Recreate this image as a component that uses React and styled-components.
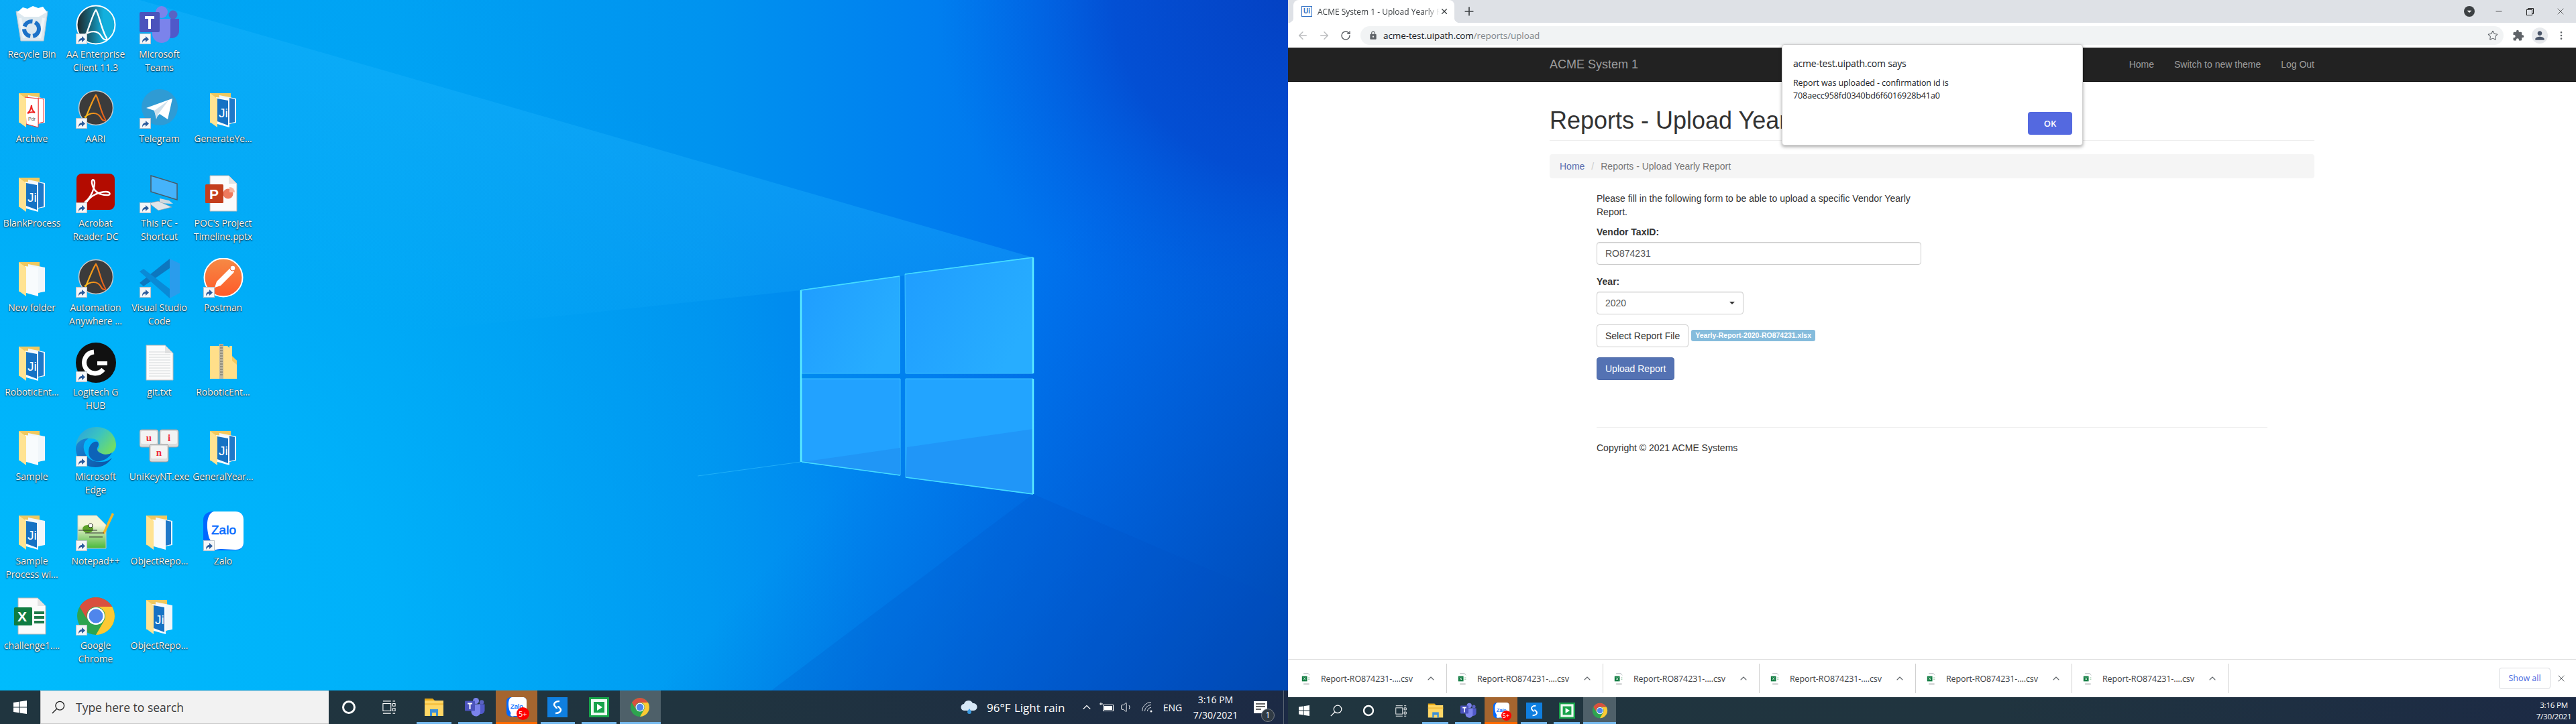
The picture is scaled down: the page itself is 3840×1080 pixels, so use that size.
import React from 'react';
import styled, { createGlobalStyle } from 'styled-components';
import { ArrowLeft, ArrowRight, RotateCw, Star, MoreVertical, ChevronUp, Minus, X, Plus, Volume1 } from 'lucide-react';
import { MdLock, MdExtension, MdPerson, MdArrowDropDown } from 'react-icons/md';

const GlobalStyle = createGlobalStyle`
  html, body { margin: 0; padding: 0; background: #000; }
  * { box-sizing: border-box; }
`;

const sysFont = `"Open Sans", "Noto Sans", sans-serif`;
const siteFont = `"Liberation Sans", Arial, sans-serif`;

const Screen = styled.div`
  display: flex;
  width: 3840px;
  height: 1080px;
  overflow: hidden;
`;

const Monitor = styled.div`
  position: relative;
  display: flex;
  flex-direction: column;
  width: 1920px;
  height: 1080px;
  background: #fff;
`;

/* ---------- wallpaper + desktop ---------- */

const Desktop = styled.div`
  position: relative;
  flex: 1;
  overflow: hidden;
`;

const WallpaperArt = styled.svg`
  position: absolute;
  inset: 0;
  width: 100%;
  height: 100%;
`;

const IconGrid = styled.div`
  position: relative;
  display: grid;
  grid-template-columns: repeat(4, 95px);
  grid-auto-rows: 126px;
`;

const DeskItem = styled.div`
  display: flex;
  flex-direction: column;
  align-items: center;
  padding-top: 7px;
`;

const DeskIconBox = styled.div`
  position: relative;
  width: 60px;
  height: 60px;
  svg { display: block; }
`;

const DeskLabel = styled.div`
  margin-top: 4px;
  width: 95px;
  text-align: center;
  white-space: pre-line;
  font: 400 14px/20px ${sysFont};
  letter-spacing: -0.1px;
  color: #fff;
  text-shadow: 0 1px 2px rgba(0, 0, 0, 0.85), 0 0 1px rgba(0, 0, 0, 0.7);
`;

const ShortcutBadge = styled.span`
  position: absolute;
  left: 0;
  bottom: 1px;
  width: 17px;
  height: 16px;
  background: #f4f6f8;
  border: 1px solid #b9c2c9;
  display: flex;
  align-items: center;
  justify-content: center;
`;

const Svg = ({ size = 60, children, box = '0 0 60 60' }) => (
  <svg width={size} height={size} viewBox={box}>{children}</svg>
);

const FolderIcon = ({ kind }) => {
  const front = kind === 'ui' || kind === 'uiFront';
  const stripe = kind === 'ui' || kind === 'uiBack';
  return (
    <Svg>
      <polygon points="10,6 41,6 41,52 10,50" fill="#efc85f" />
      <polygon points="24,9 49,14 49,50 38,52 24,50" fill="#f1f6fa" />
      {stripe && <polygon points="39,13 47,15 47,49 39,51" fill="#1f78c8" />}
      {kind === 'pdf' && <polygon points="39,13 47,15 47,49 39,51" fill="#fff" stroke="#e33" strokeWidth="1" />}
      <polygon points="19,12 39,14 39,57 21,52" fill={kind === 'pdf' ? '#fff' : '#f8fbfd'} stroke={kind === 'pdf' ? '#e33' : 'none'} />
      {front && <polygon points="21,14 37,17 37,54 21,48" fill="#1672c4" />}
      {front && <text x="23" y="42" fontFamily="Liberation Sans" fontSize="19" fill="#fff">Ji</text>}
      {kind === 'pdf' && <path d="M29 24c-1 6-3 10-6 12 4-2 8-2 11-1-3-2-5-6-5-11z" fill="none" stroke="#e22" strokeWidth="2" />}
      {kind === 'pdf' && <text x="24" y="47" fontFamily="Liberation Sans" fontSize="7" fill="#555">Pdr</text>}
      <polygon points="10,6 21,14 21,57 10,49" fill="#ffe392" />
    </Svg>
  );
};

const ZipFolder = () => (
  <Svg>
    <path d="M10 5h26l3 3v-3h4v16l7 6v27H10z" fill="#ffdf8a" />
    <path d="M43 5v22l7 6v-6l-7-7z" fill="#f3c95f" />
    <rect x="24" y="2" width="6" height="52" fill="#bdb7a2" />
    <path d="M25 4h4M25 8h4M25 12h4M25 16h4M25 20h4M25 24h4M25 28h4M25 32h4M25 36h4M25 40h4M25 44h4M25 48h4" stroke="#6d6a5c" strokeWidth="1.2" />
  </Svg>
);

const RecycleIcon = () => (
  <Svg>
    <polygon points="6,10 53,10 47,54 13,54" fill="#dce8ef" stroke="#b8c7d0" />
    <path d="M8 11l8-7 7 2 8-4 8 3 7-2 6 8-12 7H18z" fill="#fff" />
    <path d="M12 20l6 30M47 20l-6 30" stroke="#f7fbfd" strokeWidth="4" opacity="0.7" />
    <circle cx="29" cy="36" r="11" fill="none" stroke="#1c72c8" strokeWidth="6" strokeDasharray="15 4" />
  </Svg>
);

const AaIcon = () => (
  <Svg>
    <defs>
      <linearGradient id="aaG" x1="0" x2="1">
        <stop offset="0" stopColor="#1d2528" />
        <stop offset="0.4" stopColor="#186f87" />
        <stop offset="0.7" stopColor="#12b0de" />
      </linearGradient>
    </defs>
    <circle cx="30" cy="30" r="28.5" fill="url(#aaG)" stroke="#fff" strokeWidth="2" />
    <path d="M15 46C21 30 26 12 30 8c4 4 8 28 15 40 4 6-3 6-7-1-5-9-16-9-27-1" fill="none" stroke="#fff" strokeWidth="2.4" />
  </Svg>
);

const AariIcon = () => (
  <Svg>
    <defs>
      <linearGradient id="arG" x1="0" x2="1">
        <stop offset="0" stopColor="#ffc21a" />
        <stop offset="1" stopColor="#e2581c" />
      </linearGradient>
    </defs>
    <circle cx="30" cy="28" r="25.5" fill="#3b3b3b" stroke="#c9c9c9" strokeWidth="1.5" />
    <path d="M14 44C20 30 26 14 30 9c4 5 7 24 13 34 4 6-3 5-6-1-5-8-15-8-24 0" fill="none" stroke="url(#arG)" strokeWidth="2.2" />
  </Svg>
);

const TeamsIcon = ({ size = 60 }) => (
  <Svg size={size}>
    <circle cx="33" cy="11" r="9" fill="#7b83eb" />
    <circle cx="50" cy="15" r="6.5" fill="#5a62c3" />
    <path d="M42 21h17v18c0 7-6 11-11 11-3 0-5-1-6-2z" fill="#5059c9" />
    <path d="M19 21h27v24c0 7-6 12-13 12s-14-6-14-13z" fill="#7b83eb" />
    <rect x="0" y="11" width="30" height="30" rx="2" fill="#4b53bc" />
    <path d="M8 17h14v4h-5v15h-4V21H8z" fill="#fff" />
  </Svg>
);

const TelegramIcon = () => (
  <Svg>
    <circle cx="30" cy="27" r="27" fill="#2f9bd4" />
    <path d="M10 28l39-14-7 31-12-8-5 5-3-10z" fill="#fff" />
    <path d="M22 32l21-15-15 20-3 8z" fill="#cfe0ec" />
  </Svg>
);

const AcrobatIcon = () => (
  <Svg>
    <rect x="1" y="0" width="57" height="54" rx="8" fill="#b30b00" />
    <path d="M14 42c6-4 13-15 14-28 0-7-5-6-4 0 2 12 9 18 23 18 6 0 4-5-2-5-9 0-22 5-28 14-2 3-4 2-3 1z" fill="none" stroke="#fff" strokeWidth="2.4" />
  </Svg>
);

const ThisPcIcon = () => (
  <Svg>
    <polygon points="17,3 56,15 56,39 17,27" fill="#45b3fb" stroke="#4a5a66" strokeWidth="1.5" />
    <polygon points="30,37 44,40 50,45 30,44" fill="#cfd8de" />
    <polygon points="14,44 28,41 48,50 28,55" fill="#dfe6ea" stroke="#8b98a0" strokeWidth="0.7" />
  </Svg>
);

const PageShape = ({ x1 = 10, x2 = 50, top = 3, bottom = 56 }) => (
  <>
    <path d={`M${x1} ${top}h${x2 - x1 - 12}l12 12v${bottom - top - 12}H${x1}z`} fill="#fbfbfb" stroke="#b7b7b7" />
    <path d={`M${x2 - 12} ${top}v12h12z`} fill="#e3e3e3" />
  </>
);

const PptIcon = () => (
  <Svg>
    <PageShape />
    <circle cx="37" cy="30" r="7.5" fill="#ee7a5d" />
    <path d="M39 20a8 8 0 0 1 8 8h-8z" fill="#f7b5a0" />
    <rect x="3" y="16" width="27" height="28" rx="1.5" fill="#c43e1c" />
    <text x="9" y="38" fontFamily="Liberation Sans" fontWeight="700" fontSize="21" fill="#fff">P</text>
  </Svg>
);

const ExcelIcon = () => (
  <Svg>
    <PageShape x1={9} x2={50} top={3} bottom={57} />
    <path d="M33 23h15v4H33zM33 30h15v4H33zM33 37h15v4H33z" fill="#1f7a4a" />
    <rect x="3" y="17" width="27" height="27" rx="1.5" fill="#107c41" />
    <text x="8" y="38" fontFamily="Liberation Sans" fontWeight="700" fontSize="21" fill="#fff">X</text>
  </Svg>
);

const VsCodeIcon = () => (
  <Svg>
    <path d="M45 1l15 7v44l-15 8z" fill="#2a9cec" />
    <path d="M45 1L0 37l6 5L45 15z" fill="#0d77bf" />
    <path d="M0 20l6-4 39 30v14z" fill="#0a8ad6" />
  </Svg>
);

const PostmanIcon = () => (
  <Svg>
    <defs>
      <linearGradient id="pmG" x1="0" y1="0" x2="0" y2="1">
        <stop offset="0" stopColor="#f58a45" />
        <stop offset="1" stopColor="#ff5a2a" />
      </linearGradient>
    </defs>
    <circle cx="30" cy="29" r="28.5" fill="url(#pmG)" stroke="#fff" strokeWidth="2" />
    <path d="M17 44l3-9 19-19c4-3 9 2 6 6L26 41z" fill="#fff" />
    <circle cx="44" cy="15" r="4" fill="#fff" stroke="#f26b3a" />
  </Svg>
);

const LogiIcon = () => (
  <Svg>
    <circle cx="30" cy="30" r="30" fill="#111" />
    <path d="M27 14a16 16 0 1 0 14 26" fill="none" stroke="#fff" strokeWidth="7" />
    <path d="M32 28h15v6H32z" fill="#fff" />
  </Svg>
);

const TextFileIcon = () => (
  <Svg>
    <PageShape x1={10} x2={50} top={4} bottom={56} />
    {[14, 18, 22, 26, 30, 34, 38, 42, 46, 50].map(y => (
      <path key={y} d={`M14 ${y}h32`} stroke="#d5d8da" strokeWidth="1" />
    ))}
  </Svg>
);

const EdgeIcon = () => (
  <Svg>
    <defs>
      <linearGradient id="edA" x1="0" y1="0" x2="1" y2="0.6">
        <stop offset="0" stopColor="#2a9fe0" />
        <stop offset="0.55" stopColor="#3bc4c0" />
        <stop offset="1" stopColor="#6fdc68" />
      </linearGradient>
      <linearGradient id="edB" x1="0" y1="0" x2="1" y2="1">
        <stop offset="0" stopColor="#1a88d8" />
        <stop offset="1" stopColor="#0c4fa0" />
      </linearGradient>
    </defs>
    <path d="M0 32C0 13 13 0 31 0c16 0 29 11 29 27 0 9-7 14-16 14-7 0-12-2-12-6 0-2 3-3 3-8 0-7-6-10-14-10C9 17 0 25 0 32z" fill="url(#edA)" />
    <path d="M0 32c0-9 9-15 19-15-7 4-9 11-6 20 3 10 13 16 26 15 6 0 11-3 15-6-5 8-14 14-25 14C13 60 0 47 0 32z" fill="url(#edB)" />
    <path d="M19 37c0-10 7-17 13-15 3 2 2 6 0 9-2 4 4 9 12 10 4 0 8-1 10-3-5 10-16 14-24 13-7-2-11-7-11-14z" fill="#0d63b8" />
  </Svg>
);

const KeyCap = ({ x, y, letter }) => (
  <g>
    <rect x={x} y={y} width="28" height="26" rx="3" fill="#dcdcdc" stroke="#9d9d9d" />
    <rect x={x + 2} y={y + 2} width="24" height="19" rx="2" fill="#f3f3f3" />
    <text x={x + 14} y={y + 17} textAnchor="middle" fontFamily="Liberation Serif" fontWeight="700" fontSize="15" fill="#ee2b3b">{letter}</text>
  </g>
);

const UniKeyIcon = () => (
  <Svg>
    <KeyCap x={0} y={4} letter="u" />
    <KeyCap x={30} y={4} letter="i" />
    <KeyCap x={15} y={26} letter="n" />
  </Svg>
);

const NotepadIcon = () => (
  <Svg>
    <defs>
      <linearGradient id="npG" x1="0" y1="0" x2="0" y2="1">
        <stop offset="0.3" stopColor="#f3f5d8" />
        <stop offset="1" stopColor="#49b83a" />
      </linearGradient>
    </defs>
    <path d="M3 6h28l14 14v35H3z" fill="url(#npG)" stroke="#c7cbc0" />
    <path d="M40 32L54 2l3 2-14 30z" fill="#f1b52a" />
    <ellipse cx="18" cy="26" rx="8" ry="6" fill="#5aa126" />
    <circle cx="22" cy="21" r="3" fill="#fff" stroke="#333" />
    <path d="M4 28h28M14 32h28M20 38h20" stroke="#333" strokeWidth="1.2" />
  </Svg>
);

const ZaloIcon = ({ size = 60 }) => (
  <Svg size={size}>
    <path d="M14 0h34c8 0 12 5 12 12v34c0 8-4 12-12 12H14C5 58 0 52 0 46V12C0 5 6 0 14 0z" fill="#0068ff" />
    <path d="M16 0h32c8 0 12 5 12 12v34c0 7-4 11-12 11-10 0-22-2-29 0-5 1-8-3-7-6 2-4 0-6-3-11C3 20 6 2 16 0z" fill="#fff" />
    <text x="12" y="34" fontFamily="Liberation Sans" fontSize="19" fontWeight="400" fill="#0068ff" stroke="#0068ff" strokeWidth="0.5">Zalo</text>
  </Svg>
);

const ChromeIcon = ({ size = 60 }) => (
  <Svg size={size}>
    <circle cx="30" cy="30" r="28" fill="#2ea44f" />
    <path d="M54.2 16A28 28 0 0 1 30 58l12.1-21A14 14 0 0 0 30 16z" fill="#fcc934" />
    <path d="M5.8 16a28 28 0 0 1 48.4 0H30a14 14 0 0 0-12.1 21z" fill="#d9503f" />
    <circle cx="30" cy="30" r="13" fill="#fff" />
    <circle cx="30" cy="30" r="10.5" fill="#4f86ec" />
  </Svg>
);

const ArrowGlyph = () => (
  <svg width="13" height="13" viewBox="0 0 13 13">
    <path d="M2 12c0-5 2-7 5-7V2l5 4.5L7 11V8C5 8 3 9 2 12z" fill="#2c5c9c" />
  </svg>
);

const deskItems = [
  { label: 'Recycle Bin', art: <RecycleIcon /> },
  { label: 'AA Enterprise\nClient 11.3', art: <AaIcon />, link: true },
  { label: 'Microsoft\nTeams', art: <TeamsIcon />, link: true },
  null,
  { label: 'Archive', art: <FolderIcon kind="pdf" /> },
  { label: 'AARI', art: <AariIcon />, link: true },
  { label: 'Telegram', art: <TelegramIcon />, link: true },
  { label: 'GenerateYe...', art: <FolderIcon kind="ui" /> },
  { label: 'BlankProcess', art: <FolderIcon kind="ui" /> },
  { label: 'Acrobat\nReader DC', art: <AcrobatIcon />, link: true },
  { label: 'This PC -\nShortcut', art: <ThisPcIcon />, link: true },
  { label: "POC's Project\nTimeline.pptx", art: <PptIcon /> },
  { label: 'New folder', art: <FolderIcon kind="blank" /> },
  { label: 'Automation\nAnywhere ...', art: <AariIcon />, link: true },
  { label: 'Visual Studio\nCode', art: <VsCodeIcon />, link: true },
  { label: 'Postman', art: <PostmanIcon />, link: true },
  { label: 'RoboticEnt...', art: <FolderIcon kind="ui" /> },
  { label: 'Logitech G\nHUB', art: <LogiIcon />, link: true },
  { label: 'git.txt', art: <TextFileIcon /> },
  { label: 'RoboticEnt...', art: <ZipFolder /> },
  { label: 'Sample', art: <FolderIcon kind="blank" /> },
  { label: 'Microsoft\nEdge', art: <EdgeIcon />, link: true },
  { label: 'UniKeyNT.exe', art: <UniKeyIcon /> },
  { label: 'GeneralYear...', art: <FolderIcon kind="ui" /> },
  { label: 'Sample\nProcess wi...', art: <FolderIcon kind="uiFront" /> },
  { label: 'Notepad++', art: <NotepadIcon />, link: true },
  { label: 'ObjectRepo...', art: <FolderIcon kind="uiBack" /> },
  { label: 'Zalo', art: <ZaloIcon />, link: true },
  { label: 'challenge1....', art: <ExcelIcon /> },
  { label: 'Google\nChrome', art: <ChromeIcon />, link: true },
  { label: 'ObjectRepo...', art: <FolderIcon kind="uiFront" /> },
];

const Wallpaper = () => (
  <WallpaperArt viewBox="0 0 1920 1030" preserveAspectRatio="none">
    <defs>
      <linearGradient id="wallBase" x1="0" x2="1" y1="0" y2="0">
        <stop offset="0" stopColor="#00a6f4" />
        <stop offset="0.3" stopColor="#00a2f3" />
        <stop offset="0.55" stopColor="#0093ef" />
        <stop offset="0.72" stopColor="#007fef" />
        <stop offset="0.85" stopColor="#006eec" />
        <stop offset="1" stopColor="#0060e2" />
      </linearGradient>
      <radialGradient id="wallGlow" gradientUnits="userSpaceOnUse" cx="0" cy="1030" r="1300">
        <stop offset="0" stopColor="#00bcfd" />
        <stop offset="0.45" stopColor="#00b4fb" stopOpacity="0.8" />
        <stop offset="1" stopColor="#00a4f4" stopOpacity="0" />
      </radialGradient>
      <radialGradient id="wallCorner" gradientUnits="userSpaceOnUse" cx="1920" cy="0" r="520">
        <stop offset="0" stopColor="#0440c2" stopOpacity="0.95" />
        <stop offset="0.5" stopColor="#0446cc" stopOpacity="0.75" />
        <stop offset="1" stopColor="#0060e2" stopOpacity="0" />
      </radialGradient>
      <linearGradient id="wallShade" gradientUnits="userSpaceOnUse" x1="1400" y1="560" x2="1920" y2="1030">
        <stop offset="0" stopColor="#0058d0" stopOpacity="0" />
        <stop offset="1" stopColor="#0046ad" stopOpacity="0.95" />
      </linearGradient>
      <linearGradient id="wallBeam" gradientUnits="userSpaceOnUse" x1="800" y1="170" x2="700" y2="520">
        <stop offset="0" stopColor="#22b8ff" stopOpacity="0.3" />
        <stop offset="1" stopColor="#22b8ff" stopOpacity="0" />
      </linearGradient>
      <linearGradient id="paneTop" x1="0" y1="0" x2="1" y2="0.5">
        <stop offset="0" stopColor="#1f9dff" />
        <stop offset="1" stopColor="#27adff" />
      </linearGradient>
    </defs>
    <rect width="1920" height="1030" fill="url(#wallBase)" />
    <rect width="1920" height="1030" fill="url(#wallGlow)" />
    <polygon points="208,0 1540,384 1194,433 0,560 0,0" fill="url(#wallBeam)" />
    <rect width="1920" height="1030" fill="url(#wallShade)" />
    <rect width="1920" height="1030" fill="url(#wallCorner)" />
    <polygon points="1540,737 1920,900 1920,1030 1150,1030" fill="#0050c0" opacity="0.18" />

    <polygon points="1194,433 1341,412 1341,557 1195,557" fill="url(#paneTop)" stroke="#3cc4ff" strokeWidth="1" />
    <polygon points="1349,409 1540,384 1540,557 1350,557" fill="url(#paneTop)" stroke="#3cc4ff" strokeWidth="1" />
    <polygon points="1195,565 1342,565 1342,709 1195,689" fill="#22a2ff" stroke="#3cc4ff" strokeWidth="1" />
    <polygon points="1350,565 1540,565 1540,737 1350,712" fill="#22a4ff" stroke="#3cc4ff" strokeWidth="1" />
    <polygon points="1197,689 1342,668 1342,709" fill="#2096f6" />
    <polygon points="1352,667 1540,640 1540,737 1350,712" fill="#2096f8" />
    <path d="M1194 433V689M1540 384V557M1540 565V737" stroke="#5cecff" strokeWidth="2.5" fill="none" />
    <path d="M1194 433L1341 412M1349 409L1540 384M1195 689L1342 709M1350 712L1540 737" stroke="#45dcff" strokeWidth="1.6" fill="none" />
    <path d="M1194 689L1040 710" stroke="#3ecaff" strokeWidth="1" opacity="0.5" />
  </WallpaperArt>
);

/* ---------- taskbar ---------- */

const Bar = styled.div`
  display: flex;
  align-items: stretch;
  flex: none;
  height: ${p => (p.$compact ? 40 : 50)}px;
  background: linear-gradient(90deg, #20353f 0%, #20343f 55%, #1c2a45 100%);
  color: #fff;
  font-family: ${sysFont};
`;

const BarSlot = styled.div`
  flex: none;
  width: ${p => p.$w}px;
  display: flex;
  align-items: center;
  justify-content: center;
`;

const SearchBox = styled.div`
  flex: none;
  width: 430px;
  display: flex;
  align-items: center;
  background: #f2f2f2;
  border: 1px solid #c8c8c8;
  border-right: 0;
  padding-left: 16px;
  gap: 16px;
  font: 400 17.5px ${sysFont};
  color: #3a3a3a;
`;

const AppSpacer = styled.div`
  flex: none;
  width: ${p => p.$w}px;
`;

const AppButton = styled.div`
  position: relative;
  flex: none;
  width: ${p => p.$w}px;
  display: flex;
  align-items: center;
  justify-content: center;
  background: ${p => p.$bg || 'transparent'};
  &::after {
    content: '';
    position: absolute;
    left: ${p => (p.$full ? 0 : '5px')};
    right: ${p => (p.$full ? 0 : '5px')};
    bottom: 0;
    height: 3px;
    background: ${p => p.$line};
  }
`;

const RedBadge = styled.span`
  position: absolute;
  left: 50%;
  top: 50%;
  width: ${p => (p.$compact ? 15 : 19)}px;
  height: ${p => (p.$compact ? 15 : 19)}px;
  border-radius: 50%;
  background: #f00;
  color: #fff;
  font: 400 ${p => (p.$compact ? 9 : 11)}px/${p => (p.$compact ? 15 : 19)}px ${sysFont};
  text-align: center;
`;

const Tray = styled.div`
  margin-left: auto;
  display: flex;
  align-items: stretch;
`;

const WeatherText = styled.div`
  flex: none;
  width: 144px;
  padding-left: 10px;
  display: flex;
  align-items: center;
  white-space: nowrap;
  word-spacing: 1px;
  font-size: 17px;
`;

const LangText = styled.div`
  flex: none;
  width: 46px;
  display: flex;
  align-items: center;
  justify-content: center;
  font-size: 14px;
`;

const Clock = styled.div`
  flex: none;
  width: ${p => p.$w}px;
  display: flex;
  flex-direction: column;
  justify-content: center;
  align-items: center;
  font-size: ${p => (p.$compact ? 11.5 : 14)}px;
  line-height: ${p => (p.$compact ? 17 : 23)}px;
  letter-spacing: ${p => (p.$compact ? '-0.2px' : 0)};
`;

const NotifySlot = styled.div`
  position: relative;
  flex: none;
  width: 52px;
  display: flex;
  align-items: center;
  justify-content: center;
`;

const NotifyCount = styled.span`
  position: absolute;
  left: 27px;
  top: 27px;
  width: 20px;
  height: 20px;
  border-radius: 50%;
  background: #303a44;
  border: 1px solid #7a8088;
  font: 400 12px/18px ${sysFont};
  text-align: center;
`;

const TrayEnd = styled.div`
  flex: none;
  width: 15px;
  position: relative;
  &::after {
    content: '';
    position: absolute;
    left: 8px;
    top: 0;
    bottom: 0;
    width: 1px;
    background: #5a6472;
  }
`;

const WinLogo = ({ size }) => (
  <svg width={size} height={size} viewBox="0 0 20 20">
    <path d="M0 3l8.5-1.2V9.5H0zM9.6 1.6L20 0v9.5H9.6zM0 10.5h8.5v7.7L0 17zM9.6 10.5H20V20L9.6 18.4z" fill="#fff" />
  </svg>
);

const SearchGlyph = ({ size, color }) => (
  <svg width={size} height={size} viewBox="0 0 22 22" fill="none" stroke={color} strokeWidth="1.5">
    <circle cx="13.5" cy="8.5" r="7" />
    <path d="M8.5 13.5L1 21" />
  </svg>
);

const CortanaGlyph = ({ size }) => (
  <svg width={size} height={size} viewBox="0 0 22 22">
    <circle cx="11" cy="11" r="8.5" fill="none" stroke="#fff" strokeWidth="3" />
  </svg>
);

const TaskViewGlyph = ({ size }) => (
  <svg width={size} height={size} viewBox="0 0 22 22" fill="none" stroke="#fff" strokeWidth="1.2">
    <path d="M1 1h13M1 21h13M17 1h4M17 21h4" />
    <rect x="1" y="5" width="13" height="12" />
    <path d="M17 5h4v4h-4zM17 13h4v4h-4z" />
  </svg>
);

const ExplorerGlyph = ({ size }) => (
  <svg width={size} height={size} viewBox="0 0 30 30">
    <path d="M1 2h12l3 3H1z" fill="#e8a917" />
    <rect x="1" y="5" width="28" height="23" fill="#ffd766" />
    <path d="M1 9h28v3H1z" fill="#f6c344" />
    <path d="M9 18h12v10H9z" fill="#3b8fd8" />
    <path d="M12 23h6v5h-6z" fill="#ffd766" />
  </svg>
);

const SwitchGlyph = ({ size }) => (
  <svg width={size} height={size} viewBox="0 0 30 30">
    <rect x="0" y="0" width="30" height="30" fill="#0f7fe0" />
    <path d="M18 6c-6 0-8 3-8 5 0 3 4 4 4 6M12 24c6 0 8-3 8-5 0-3-4-4-4-6" fill="none" stroke="#fff" strokeWidth="2.5" />
  </svg>
);

const PlayerGlyph = ({ size }) => (
  <svg width={size} height={size} viewBox="0 0 30 30">
    <rect x="0" y="0" width="30" height="30" fill="#17a34a" />
    <rect x="3" y="3" width="24" height="24" fill="#eefaf2" />
    <rect x="7" y="7" width="16" height="16" fill="#17a34a" />
    <path d="M12 10l8 5-8 5z" fill="#fff" />
  </svg>
);

const CloudGlyph = () => (
  <svg width="26" height="22" viewBox="0 0 26 22">
    <path d="M6 16a5 5 0 0 1-1-10 7 7 0 0 1 13-1 5.5 5.5 0 0 1 2 11z" fill="#d7e8f7" />
    <path d="M13 13c2 2.5 3 4 3 5a3 3 0 0 1-6 0c0-1 1-2.500 3-5z" fill="#3b9ae0" />
  </svg>
);

const BatteryGlyph = () => (
  <svg width="22" height="14" viewBox="0 0 22 14" fill="none" stroke="#fff">
    <rect x="5.500" y="3.500" width="15" height="9" />
    <rect x="7" y="5" width="12" height="6" fill="#fff" stroke="none" />
    <path d="M0 2h5M2 0v4" strokeWidth="1.2" />
  </svg>
);

const WifiGlyph = () => (
  <svg width="18" height="18" viewBox="0 0 18 18" fill="none" stroke="#d7dde2" strokeWidth="1">
    <circle cx="15" cy="15" r="1.500" fill="#fff" stroke="none" />
    <path d="M15 9.500A5.500 5.500 0 0 0 9.500 15M15 5.500A9.500 9.500 0 0 0 5.500 15M15 1.500A13.500 13.500 0 0 0 1.500 15" />
  </svg>
);

const NotifyGlyph = () => (
  <svg width="20" height="18" viewBox="0 0 20 18">
    <path d="M0 0h20v18H0z" fill="#fff" />
    <path d="M3 4h14M3 8h14M3 12h8" stroke="#333" strokeWidth="1.300" />
  </svg>
);

const Taskbar = ({ compact }) => {
  const slot = compact ? 48 : 60;
  const app = compact ? 49 : 61.5;
  const art = compact ? 24 : 30;
  return (
    <Bar $compact={compact}>
      <BarSlot $w={slot}><WinLogo size={compact ? 16 : 20} /></BarSlot>
      {compact ? (
        <BarSlot $w={slot}><SearchGlyph size={18} color="#fff" /></BarSlot>
      ) : (
        <SearchBox><SearchGlyph size={20} color="#222" />Type here to search</SearchBox>
      )}
      <BarSlot $w={slot}><CortanaGlyph size={compact ? 18 : 22} /></BarSlot>
      <BarSlot $w={slot}><TaskViewGlyph size={compact ? 17 : 20} /></BarSlot>
      <AppSpacer $w={compact ? 3 : 6} />
      <AppButton $w={app} $line="#76b9ed"><ExplorerGlyph size={art} /></AppButton>
      <AppButton $w={app} $line="#76b9ed"><TeamsIcon size={art} /></AppButton>
      <AppButton $w={app} $bg="#a5652f" $line="#ff6a00" $full>
        <ZaloIcon size={art} />
        <RedBadge $compact={compact}>5+</RedBadge>
      </AppButton>
      <AppButton $w={app} $line="#76b9ed"><SwitchGlyph size={art} /></AppButton>
      <AppButton $w={app} $line="#76b9ed"><PlayerGlyph size={art} /></AppButton>
      <AppButton $w={app} $bg="#4e6069" $line="#76b9ed" $full><ChromeIcon size={art} /></AppButton>
      <Tray>
        {compact ? (
          <Clock $compact $w={66}><span>3:16 PM</span><span>7/30/2021</span></Clock>
        ) : (
          <>
            <BarSlot $w={32}><CloudGlyph /></BarSlot>
            <WeatherText>96°F Light rain</WeatherText>
            <BarSlot $w={30}><ChevronUp size={20} strokeWidth={1.3} /></BarSlot>
            <BarSlot $w={30}><BatteryGlyph /></BarSlot>
            <BarSlot $w={30}><Volume1 size={20} strokeWidth={1.1} /></BarSlot>
            <BarSlot $w={30}><WifiGlyph /></BarSlot>
            <LangText>ENG</LangText>
            <Clock $w={82}><span>3:16 PM</span><span>7/30/2021</span></Clock>
            <NotifySlot><NotifyGlyph /><NotifyCount>1</NotifyCount></NotifySlot>
            <TrayEnd />
          </>
        )}
      </Tray>
    </Bar>
  );
};

/* ---------- browser chrome ---------- */

const TabStrip = styled.div`
  flex: none;
  height: 34px;
  display: flex;
  align-items: center;
  background: #dee1e6;
  padding-left: 8px;
`;

const Tab = styled.div`
  position: relative;
  flex: none;
  align-self: flex-end;
  width: 240px;
  height: 34px;
  display: flex;
  align-items: center;
  padding: 0 8px 0 12px;
  background: #fff;
  border-radius: 8px 8px 0 0;
  &::before, &::after {
    content: '';
    position: absolute;
    bottom: 0;
    width: 8px;
    height: 8px;
  }
  &::before { left: -8px; background: radial-gradient(circle at 0 0, transparent 8px, #fff 8.5px); }
  &::after { right: -8px; background: radial-gradient(circle at 100% 0, transparent 8px, #fff 8.5px); }
`;

const Favicon = styled.span`
  flex: none;
  width: 16px;
  height: 16px;
  border: 1.500px solid #2f6fc4;
  color: #2f6fc4;
  font: 700 10px/13px ${siteFont};
  text-align: center;
`;

const TabTitle = styled.span`
  flex: 1;
  margin-left: 8px;
  overflow: hidden;
  white-space: nowrap;
  font: 400 12px ${sysFont};
  color: #3c4043;
  -webkit-mask-image: linear-gradient(90deg, #000 88%, transparent 100%);
  mask-image: linear-gradient(90deg, #000 88%, transparent 100%);
`;

const NewTab = styled.span`
  flex: none;
  margin-left: 12px;
  display: flex;
  color: #3c4043;
`;

const StripRight = styled.div`
  margin-left: auto;
  display: flex;
  align-items: center;
  height: 100%;
`;

const ProfileDot = styled.span`
  flex: none;
  width: 16px;
  height: 16px;
  margin-right: 13px;
  border-radius: 50%;
  background: #3c4043;
  display: flex;
  align-items: center;
  justify-content: center;
  color: #fff;
`;

const WindowButton = styled.span`
  flex: none;
  width: 46px;
  height: 100%;
  display: flex;
  align-items: center;
  justify-content: center;
  color: #222;
`;

const RestoreGlyph = () => (
  <svg width="11" height="11" viewBox="0 0 11 11" fill="none" stroke="#222">
    <rect x="0.500" y="2.500" width="8" height="8" />
    <path d="M2.500 2.500v-2h8v8h-2" />
  </svg>
);

const Toolbar = styled.div`
  flex: none;
  height: 37px;
  display: flex;
  align-items: center;
  background: #fff;
  padding: 0 6px;
`;

const ToolButton = styled.span`
  flex: none;
  width: 32px;
  display: flex;
  align-items: center;
  justify-content: center;
  color: ${p => p.$color || '#5f6368'};
`;

const Omnibox = styled.div`
  flex: 1;
  height: 28px;
  margin: 0 6px;
  padding: 0 8px 0 12px;
  display: flex;
  align-items: center;
  gap: 8px;
  border-radius: 14px;
  background: #f1f3f4;
`;

const UrlText = styled.span`
  flex: 1;
  font: 400 13.500px ${sysFont};
  letter-spacing: -0.1px;
  color: #80868b;
  b { font-weight: 400; color: #202124; }
`;

const AvatarDot = styled.span`
  width: 24px;
  height: 24px;
  border-radius: 50%;
  background: #e8eaed;
  display: flex;
  align-items: center;
  justify-content: center;
  color: #4a5568;
`;

/* ---------- page ---------- */

const Page = styled.div`
  flex: 1;
  overflow: hidden;
  background: #fff;
  font: 400 14px/20px ${siteFont};
  color: #333;
`;

const NavBar = styled.nav`
  height: 50px;
  background: #222;
  box-shadow: 0 1px 0 #080808;
  color: #9d9d9d;
`;

const Container = styled.div`
  width: 1170px;
  margin: 0 auto;
  padding: 0 15px;
`;

const NavInner = styled.div`
  display: flex;
  align-items: center;
  justify-content: space-between;
  height: 50px;
`;

const Brand = styled.span`
  font-size: 18px;
`;

const NavLinks = styled.div`
  display: flex;
  margin-right: -15px;
`;

const NavLink = styled.a`
  padding: 15px;
`;

const PageHeader = styled.div`
  margin-top: 39px;
  padding-bottom: 9px;
  border-bottom: 1px solid #eee;
`;

const Title = styled.h1`
  margin: 0;
  font: 500 36px/39.600px ${siteFont};
  color: #333;
`;

const Breadcrumb = styled.div`
  margin: 20px 0;
  padding: 8px 15px;
  height: 36px;
  border-radius: 4px;
  background: #f5f5f5;
  color: #777;
  display: flex;
`;

const Crumb = styled.a`
  color: #5a6fb0;
`;

const CrumbSep = styled.span`
  padding: 0 5px;
  margin: 0 5px;
  color: #ccc;
`;

const FormArea = styled.div`
  margin-left: 70px;
  width: 1000px;
`;

const FormColumn = styled.div`
  width: 484px;
`;

const Intro = styled.p`
  margin: 0 0 10px;
`;

const FieldGroup = styled.div`
  margin-bottom: 15px;
`;

const FieldLabel = styled.label`
  display: block;
  margin-bottom: 5px;
  font-weight: 700;
`;

const TextInput = styled.div`
  height: 34px;
  width: ${p => p.$w}px;
  padding: 6px 12px;
  border: 1px solid #ccc;
  border-radius: 4px;
  box-shadow: inset 0 1px 1px rgba(0, 0, 0, 0.075);
  color: #555;
  display: flex;
  align-items: center;
  justify-content: space-between;
`;

const Caret = styled.span`
  width: 0;
  height: 0;
  border-top: 4px solid #333;
  border-left: 4px solid transparent;
  border-right: 4px solid transparent;
`;

const FileRow = styled.div`
  display: flex;
  align-items: center;
  gap: 4px;
  margin-bottom: 15px;
`;

const PlainButton = styled.div`
  height: 34px;
  padding: 6px 12px;
  border: 1px solid #ccc;
  border-radius: 4px;
  color: #333;
  background: #fff;
`;

const FileBadge = styled.span`
  height: 17px;
  padding: 0 6px;
  border-radius: 3px;
  background: #85bcdc;
  color: #fff;
  font: 700 10.500px/17px ${siteFont};
`;

const PrimaryButton = styled.div`
  display: inline-block;
  height: 34px;
  padding: 6px 12px;
  border: 1px solid #4c69a8;
  border-radius: 4px;
  background: #5472b3;
  color: #fff;
`;

const FooterRule = styled.hr`
  margin: 70px 0 20px;
  border: 0;
  border-top: 1px solid #eee;
`;

/* ---------- alert dialog ---------- */

const AlertBox = styled.div`
  position: absolute;
  left: 736px;
  top: 66px;
  width: 449px;
  padding: 18px 15px 15px 16px;
  background: #fff;
  border: 1px solid #d0d0d0;
  border-radius: 4px;
  box-shadow: 0 2px 5px rgba(0, 0, 0, 0.35);
  font-family: ${sysFont};
  color: #202124;
`;

const AlertTitle = styled.div`
  font-size: 14px;
  line-height: 20px;
  letter-spacing: -0.2px;
`;

const AlertBody = styled.div`
  margin-top: 9px;
  font-size: 12.500px;
  line-height: 19px;
  letter-spacing: -0.1px;
  width: 300px;
`;

const AlertActions = styled.div`
  margin-top: 15px;
  display: flex;
  justify-content: flex-end;
`;

const AlertOk = styled.div`
  width: 66px;
  height: 34px;
  border-radius: 4px;
  background: #5469e0;
  color: #fff;
  font: 600 13px/34px ${sysFont};
  text-align: center;
`;

/* ---------- downloads shelf ---------- */

const Shelf = styled.div`
  flex: none;
  height: 57px;
  display: flex;
  align-items: center;
  padding: 0 6px 0 4px;
  border-top: 1px solid #dcdcdc;
  background: #fff;
`;

const ShelfItem = styled.div`
  flex: none;
  width: 233px;
  height: 44px;
  display: flex;
  align-items: center;
  padding-left: 16px;
  border-right: 1px solid #d0d0d0;
  color: #5f6368;
`;

const ShelfName = styled.span`
  flex: none;
  width: 139px;
  margin: 0 17px 0 15px;
  white-space: nowrap;
  font: 400 12.500px ${sysFont};
  letter-spacing: -0.1px;
  color: #3c4043;
`;

const ShowAll = styled.div`
  margin-left: auto;
  width: 77px;
  height: 32px;
  border: 1px solid #dadce0;
  border-radius: 4px;
  color: #4a6ae0;
  font: 400 12.500px/30px ${sysFont};
  text-align: center;
`;

const ShelfClose = styled.span`
  display: flex;
  width: 32px;
  justify-content: center;
  color: #5f6368;
`;

const CsvGlyph = () => (
  <svg width="14" height="17" viewBox="0 0 18 22" fill="none" style={{ flex: 'none' }}>
    <path d="M4 1h9l3 3" stroke="#9aa0a6" />
    <path d="M4 21h11" stroke="#5f6368" />
    <rect x="1" y="6" width="10" height="10" fill="#107c41" />
    <path d="M4 8.500l4 5M8 8.500l-4 5" stroke="#fff" />
    <path d="M13 9h3M13 12h3" stroke="#7cb98f" />
  </svg>
);

const shelfIds = [0, 1, 2, 3, 4, 5];

export default function App() {
  return (
    <>
      <GlobalStyle />
      <Screen>
        <Monitor>
          <Desktop>
            <Wallpaper />
            <IconGrid>
              {deskItems.map((item, i) =>
                item ? (
                  <DeskItem key={i}>
                    <DeskIconBox>
                      {item.art}
                      {item.link && <ShortcutBadge><ArrowGlyph /></ShortcutBadge>}
                    </DeskIconBox>
                    <DeskLabel>{item.label}</DeskLabel>
                  </DeskItem>
                ) : (
                  <div key={i} />
                )
              )}
            </IconGrid>
          </Desktop>
          <Taskbar />
        </Monitor>

        <Monitor>
          <TabStrip>
            <Tab>
              <Favicon>Ui</Favicon>
              <TabTitle>ACME System 1 - Upload Yearly Report</TabTitle>
              <X size={14} strokeWidth={2} color="#3c4043" />
            </Tab>
            <NewTab><Plus size={20} strokeWidth={2} /></NewTab>
            <StripRight>
              <ProfileDot><MdArrowDropDown size={18} /></ProfileDot>
              <WindowButton><Minus size={14} strokeWidth={1.2} /></WindowButton>
              <WindowButton><RestoreGlyph /></WindowButton>
              <WindowButton><X size={16} strokeWidth={1} /></WindowButton>
            </StripRight>
          </TabStrip>
          <Toolbar>
            <ToolButton $color="#babcbe"><ArrowLeft size={18} strokeWidth={2} /></ToolButton>
            <ToolButton $color="#babcbe"><ArrowRight size={18} strokeWidth={2} /></ToolButton>
            <ToolButton><RotateCw size={16} strokeWidth={2.2} /></ToolButton>
            <Omnibox>
              <MdLock size={14} color="#5f6368" />
              <UrlText><b>acme-test.uipath.com</b>/reports/upload</UrlText>
              <Star size={16} strokeWidth={1.6} color="#5f6368" />
            </Omnibox>
            <ToolButton><MdExtension size={18} /></ToolButton>
            <ToolButton><AvatarDot><MdPerson size={20} /></AvatarDot></ToolButton>
            <ToolButton><MoreVertical size={16} strokeWidth={2} /></ToolButton>
          </Toolbar>

          <Page>
            <NavBar>
              <Container>
                <NavInner>
                  <Brand>ACME System 1</Brand>
                  <NavLinks>
                    <NavLink>Home</NavLink>
                    <NavLink>Switch to new theme</NavLink>
                    <NavLink>Log Out</NavLink>
                  </NavLinks>
                </NavInner>
              </Container>
            </NavBar>
            <Container>
              <PageHeader><Title>Reports - Upload Yearly Report</Title></PageHeader>
              <Breadcrumb>
                <Crumb>Home</Crumb>
                <CrumbSep>/</CrumbSep>
                <span>Reports - Upload Yearly Report</span>
              </Breadcrumb>
              <FormArea>
                <FormColumn>
                  <Intro>Please fill in the following form to be able to upload a specific Vendor Yearly Report.</Intro>
                  <FieldGroup>
                    <FieldLabel>Vendor TaxID:</FieldLabel>
                    <TextInput $w={484}>RO874231</TextInput>
                  </FieldGroup>
                  <FieldGroup>
                    <FieldLabel>Year:</FieldLabel>
                    <TextInput $w={219}>2020<Caret /></TextInput>
                  </FieldGroup>
                  <FileRow>
                    <PlainButton>Select Report File</PlainButton>
                    <FileBadge>Yearly-Report-2020-RO874231.xlsx</FileBadge>
                  </FileRow>
                  <PrimaryButton>Upload Report</PrimaryButton>
                </FormColumn>
                <FooterRule />
                <div>Copyright © 2021 ACME Systems</div>
              </FormArea>
            </Container>
          </Page>

          <AlertBox>
            <AlertTitle>acme-test.uipath.com says</AlertTitle>
            <AlertBody>Report was uploaded - confirmation id is 708aecc958fd0340bd6f6016928b41a0</AlertBody>
            <AlertActions><AlertOk>OK</AlertOk></AlertActions>
          </AlertBox>

          <Shelf>
            {shelfIds.map(id => (
              <ShelfItem key={id}>
                <CsvGlyph />
                <ShelfName>Report-RO874231-....csv</ShelfName>
                <ChevronUp size={16} strokeWidth={1.6} />
              </ShelfItem>
            ))}
            <ShowAll>Show all</ShowAll>
            <ShelfClose><X size={16} strokeWidth={1.5} /></ShelfClose>
          </Shelf>
          <Taskbar compact />
        </Monitor>
      </Screen>
    </>
  );
}
